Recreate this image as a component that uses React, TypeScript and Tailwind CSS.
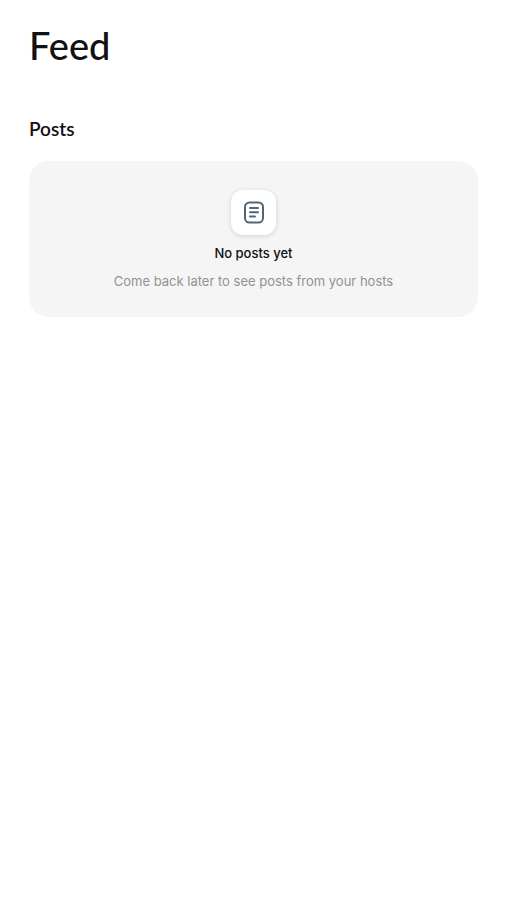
const PostIcon = () => (
    <svg
        className="size-6 text-[#526571]"
        viewBox="0 0 24 24"
        fill="none"
        stroke="currentColor"
        strokeWidth="2"
        strokeLinecap="round"
        strokeLinejoin="round"
        aria-hidden="true"
    >
        <rect x="3" y="1.5" width="18" height="20" rx="4.5" />
        <path d="M8 7h8M8 11.25h8M8 15.5h5" />
    </svg>
)

export default function App() {
    return (
        <main className="min-h-screen bg-white px-[29px] pt-[23px] font-['Lato',sans-serif] text-[#111111]">
            <h1 className="text-[38px] leading-11 font-medium">Feed</h1>

            {/* POSTS */}
            <section className="mt-12">
                <h2 className="text-[19px] leading-7 font-semibold">Posts</h2>

                <div className="mt-[18px] flex flex-col items-center rounded-[20px] bg-[#f5f5f5] px-4 pt-[29px] pb-[26px] text-center font-['Inter',sans-serif] text-[13px] leading-5">
                    <div className="flex size-[45px] items-center justify-center rounded-xl bg-white shadow-[0_1px_5px_rgba(0,0,0,0.15)]">
                        <PostIcon />
                    </div>
                    <p className="mt-2 font-medium">No posts yet</p>
                    <p className="mt-2 text-[#929292]">
                        Come back later to see posts from your hosts
                    </p>
                </div>
            </section>
        </main>
    )
}
